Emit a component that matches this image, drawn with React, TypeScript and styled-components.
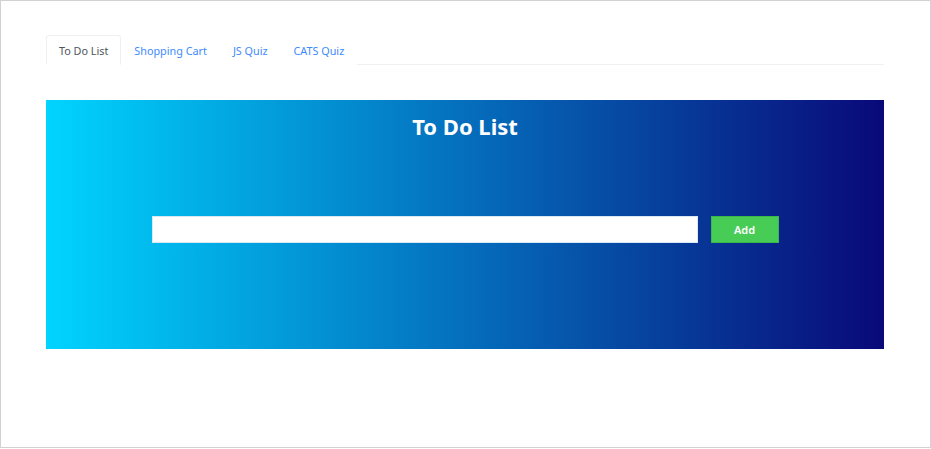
import React from "react";
import styled, { createGlobalStyle } from "styled-components";

const Global = createGlobalStyle`
  html, body { margin: 0; padding: 0; background: #ffffff; }
  body { font-family: "Segoe UI", "Noto Sans", "Open Sans", sans-serif; }
  * { box-sizing: border-box; }
`;

const Frame = styled.div`
  width: 931px;
  height: 448px;
  border: 1px solid #d2d2d2;
  background: #ffffff;
  padding: 34px 46px 0 45px;
`;

const Tabs = styled.ul`
  display: flex;
  list-style: none;
  margin: 0;
  padding: 0;
  border-bottom: 1px solid #eef0f2;
  height: 30px;
`;

const Tab = styled.li<{ $active?: boolean }>`
  height: 30px;
  margin-bottom: -1px;
  padding: 0 12px;
  display: flex;
  align-items: center;
  font-size: 10.8px;
  color: ${(p) => (p.$active ? "#4f555b" : "#3d8bfd")};
  background: #ffffff;
  border: 1px solid ${(p) => (p.$active ? "#eef0f2" : "transparent")};
  border-bottom-color: ${(p) => (p.$active ? "#ffffff" : "transparent")};
  border-radius: 3px 3px 0 0;
  cursor: pointer;
  white-space: nowrap;
`;

const Panel = styled.section`
  margin-top: 35px;
  height: 249px;
  background: linear-gradient(90deg, #00d4ff 0%, #090979 100%);
  display: flex;
  flex-direction: column;
  align-items: center;
  padding-top: 11px;
`;

const Title = styled.h1`
  margin: 0;
  color: #ffffff;
  font-size: 22px;
  font-weight: 700;
  line-height: 30px;
`;

const Row = styled.div`
  margin-top: 75px;
  display: flex;
  gap: 13px;
`;

const Input = styled.input`
  width: 546px;
  height: 27px;
  border: 1px solid #d8e8f4;
  background: #ffffff;
  outline: none;
  padding: 0 6px;
`;

const AddButton = styled.button`
  width: 68px;
  height: 27px;
  border: 1px solid #3cb84a;
  background: #47cc55;
  color: #ffffff;
  font-family: inherit;
  font-size: 11px;
  font-weight: 600;
  cursor: pointer;
`;

export default function App() {
  const tabs = ["To Do List", "Shopping Cart", "JS Quiz", "CATS Quiz"];
  return (
    <>
      <Global />
      <Frame>
        <Tabs>
          {tabs.map((t, i) => (
            <Tab key={t} $active={i === 0}>
              {t}
            </Tab>
          ))}
        </Tabs>
        <Panel>
          <Title>To Do List</Title>
          <Row>
            <Input type="text" />
            <AddButton>Add</AddButton>
          </Row>
        </Panel>
      </Frame>
    </>
  );
}
